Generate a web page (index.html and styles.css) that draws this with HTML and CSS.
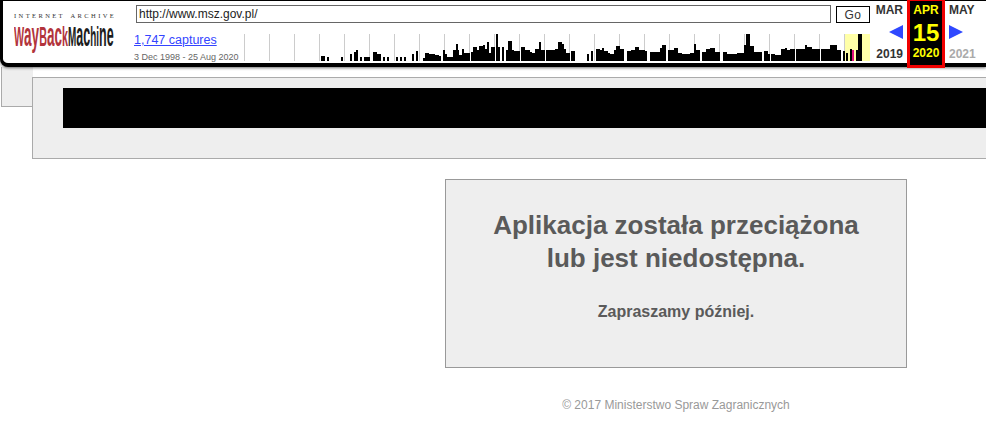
FILE: index.html
```html
<!DOCTYPE html>
<html lang="pl">
<head>
<meta charset="utf-8">
<title>Ministerstwo Spraw Zagranicznych</title>
<link rel="stylesheet" href="styles.css">
</head>
<body>
<header class="wb">
  <a class="logo" href="#">
    <div class="ia">INTERNET ARCHIVE</div>
    <div class="words">
      <div class="word way"><span class="squeeze"><span class="cap">W</span>ay<span class="cap">B</span>ac<span class="cap">k</span></span></div>
      <div class="word mach"><span class="squeeze"><span class="cap">M</span>ac<span class="cap">hi</span>ne</span></div>
    </div>
  </a>
  <div class="main">
    <form class="urlrow">
      <input class="url" type="text" value="http://www.msz.gov.pl/">
      <button class="go" type="button">Go</button>
    </form>
    <div class="statsrow">
      <div class="stats">
        <a class="captures" href="#">1,747 captures</a>
        <span class="dates">3 Dec 1998 - 25 Aug 2020</span>
      </div>
      <svg class="chart" width="626" height="27" viewBox="244 34 626 27">
        <rect class="hl" x="845" y="34" width="25" height="27"/>
        <path class="grid" d="M244.500 34V61M269.500 34V61M294.500 34V61M319.500 34V61M344.500 34V61M369.500 34V61M394.500 34V61M419.500 34V61M444.500 34V61M469.500 34V61M494.500 34V61M519.500 34V61M544.500 34V61M569.500 34V61M594.500 34V61M619.500 34V61M644.500 34V61M669.500 34V61M694.500 34V61M719.500 34V61M744.500 34V61M769.500 34V61M794.500 34V61M819.500 34V61M844.500 34V61"/>
        <path class="bars" d="M321 61V56H325V61ZM327 61V57H329V61ZM341 61V57H343V61ZM350 61V54H352V61ZM354 61V52H356V50H358V61ZM360 61V57H362V61ZM364 61V57H370V61ZM373 61V52H377V54H381V61ZM383 61V57H385V61ZM387 61V57H389V61ZM396 61V57H398V61ZM400 61V57H402V61ZM404 61V57H406V61ZM412 61V54H414V61ZM416 61V51H418V61ZM423 61V58H425V53H429V54H435V55H439V56H441V61ZM443 61V50H445V54H447V61ZM447 61V57H453V50H456V44H458V50H459V55H462V49H464V53H470V61ZM471 61V52H473V47H477V50H479V46H483V45H485V49H487V42H489V53H491V47H495V61ZM496 61V34H498V47H500V61ZM502 61V47H504V61ZM506 61V50H508V41H512V50H514V51H520V61ZM521 61V47H525V50H530V52H532V53H535V49H539V42H541V50H545V61ZM546 61V50H555V49H558V42H562V44H564V49H566V53H570V61ZM571 61V51H575V61ZM587 61V54H589V61ZM591 61V51H593V61ZM596 61V49H600V50H602V48H604V51H608V53H610V54H614V50H616V46H620V49H624V61ZM627 61V51H631V50H635V47H639V50H645V51H647V61ZM650 61V52H660V48H662V45H666V61ZM668 61V50H670V61ZM670 61V50H674V48H678V53H682V54H690V53H694V44H696V50H700V61ZM702 61V52H706V49H710V48H715V52H720V61ZM723 61V52H727V54H737V53H744V45H746V34H750V46H754V52H762V61ZM764 61V51H768V54H770V61ZM771 61V54H775V55H781V49H785V48H787V50H790V49H795V61ZM796 61V49H805V45H807V47H812V49H820V61ZM821 61V49H830V45H837V50H841V61ZM843 61V51H845V61ZM846 61V53H848V61ZM850 61V49H852V61ZM856 61V50H858V61ZM858 61V34H862V61Z"/>
        <rect class="pick" x="852" y="50" width="2" height="11"/>
      </svg>
    </div>
  </div>
  <nav class="cal">
    <div class="col prev">
      <a href="#">MAR</a>
      <svg width="14" height="14" viewBox="0 0 14 14"><polygon points="14,0 14,14 0,7"/></svg>
      <a href="#">2019</a>
    </div>
    <div class="col cur">
      <span class="mon">APR</span>
      <span class="day">15</span>
      <span class="mon">2020</span>
    </div>
    <div class="col next">
      <span>MAY</span>
      <svg width="14" height="14" viewBox="0 0 14 14"><polygon points="0,0 14,7 0,14"/></svg>
      <span class="off">2021</span>
    </div>
  </nav>
</header>

<div class="top">
  <div class="tab"></div>
  <div class="band"><div class="blackbar"></div></div>
</div>

<main class="content">
  <section class="notice">
    <h1>Aplikacja została przeciążona<br>lub jest niedostępna.</h1>
    <p>Zapraszamy później.</p>
  </section>
  <footer class="copy">© 2017 Ministerstwo Spraw Zagranicznych</footer>
</main>
</body>
</html>
```

FILE: styles.css
```css
* { box-sizing: border-box; }
html, body { margin: 0; padding: 0; background: #fff; overflow: hidden; }
body { font-family: "Liberation Sans", Arial, sans-serif; }

.wb {
  position: relative;
  z-index: 2;
  display: flex;
  height: 67px;
  background: #fff;
  border-style: solid;
  border-color: #000;
  border-width: 1px 0 4px 3px;
  border-bottom-left-radius: 8px;
  box-shadow: 0 1px 3px rgba(0, 0, 0, .55);
}
.logo { display: block; width: 133px; flex: none; padding: 11px 0 0 11px; text-decoration: none; }
.ia { font: 6.500px/8px "Liberation Serif", serif; color: #333; letter-spacing: 2.400px; word-spacing: 2px; white-space: nowrap; }
.words { display: flex; height: 28px; margin-top: 0; }
.word { flex: none; font: bold 34px/28px "Liberation Sans", sans-serif; white-space: nowrap; }
.squeeze { display: inline-block; transform-origin: 0 50%; }
.way { width: 54px; color: #b2343c; }
.way .squeeze { transform: scaleX(.397); }
.mach { width: 46px; color: #1c1c1c; }
.mach .squeeze { transform: scaleX(.368); }
.cap { font-size: 27px; }

.main { width: 737px; flex: none; display: flex; flex-direction: column; }
.urlrow { display: flex; align-items: flex-start; gap: 5px; padding-top: 4px; height: 29px; }
.url {
  width: 695px; height: 18px; margin: 0; padding: 0 2px;
  border: 1px solid #666; background: #fff; color: #222;
  font: 12px "Liberation Sans", sans-serif;
  outline: 0;
}
.go {
  width: 34px; height: 17px; margin: 1px 0 0; padding: 0;
  border: 1px solid #000; background: #fff; color: #333;
  font: 12px "Liberation Sans", sans-serif;
  letter-spacing: .5px;
}
.statsrow { display: flex; height: 33px; align-items: flex-start; margin-left: -2px; }
.stats { width: 110px; flex: none; display: flex; flex-direction: column; padding-top: 3px; }
.captures { font-size: 12.500px; line-height: 15px; color: #3344ff; text-decoration: underline; white-space: nowrap; }
.dates { font-size: 9px; line-height: 12px; margin-top: 3px; color: #666; white-space: nowrap; }
.chart { display: block; flex: none; margin-top: 4px; }
.hl { fill: #ffffa8; }
.grid { stroke: #ccc; stroke-width: 1; fill: none; }
.bars { fill: #000; }
.pick { fill: #e0107f; }

.cal { display: flex; flex: none; height: 62px; font-size: 12px; font-weight: bold; color: #333; }
.col { display: flex; flex-direction: column; justify-content: space-between; }
.col a { color: #333; text-decoration: none; }
.col svg { display: block; fill: #2f48ff; }
.prev { width: 34px; padding: 2px 4px 2px 0; align-items: flex-end; line-height: 14px; }
.next { width: 38px; padding: 2px 0 2px 4px; align-items: flex-start; line-height: 14px; }
.off { color: #aaa; }
.cur {
  width: 38px; height: 68px; margin-top: -1px; flex: none;
  padding: 2px 0 5px;
  background: #000; color: #ff0;
  border: 3px solid #f00000;
  border-top-width: 1px;
  align-items: center;
  line-height: 14px;
}
.mon { display: block; }
.day { display: block; font-size: 24px; line-height: 26px; margin-top: 3px; }

.top { display: flex; align-items: flex-start; height: 91px; }
.tab {
  width: 32px; height: 40px; flex: none; margin-left: 1px;
  background: #eee;
  border: 1px solid #aaa; border-width: 0 0 1px 1px;
}
.band {
  flex: 1; margin-top: 10px; margin-right: -2px; margin-left: -1px;
  height: 82px; padding: 10px 0 0 30px;
  background: #eee; border: 1px solid #aaa;
}
.blackbar { height: 40px; background: #000; }

.content { display: flex; flex-direction: column; width: 462px; margin-left: 445px; margin-top: 21px; }
.notice {
  height: 189px; padding-top: 29px;
  background: #eee; border: 1px solid #999;
  text-align: center; color: #5a5a5a;
}
.notice h1 { margin: 0; font-size: 26px; line-height: 33px; font-weight: bold; }
.notice p { margin: 27px 0 0; font-size: 16px; line-height: 20px; font-weight: bold; }
.copy { margin-top: 30px; text-align: center; font-size: 12px; line-height: 14px; color: #999; }
```
